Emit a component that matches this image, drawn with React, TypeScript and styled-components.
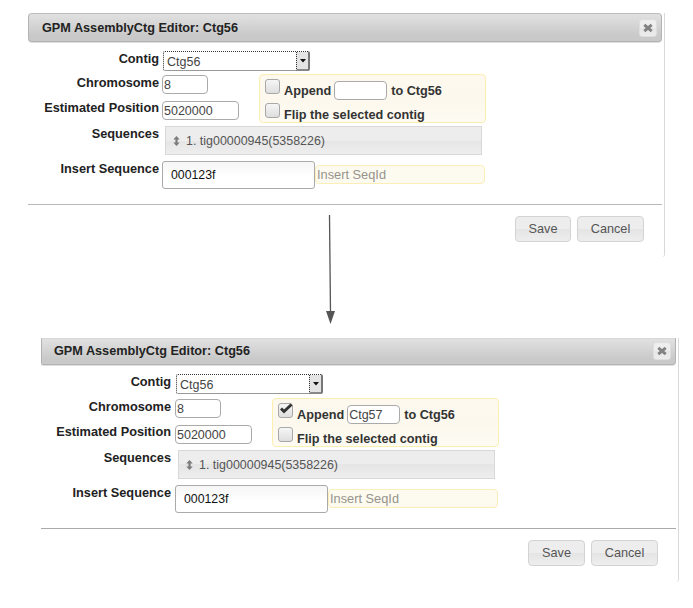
import React from 'react';
import styled, { createGlobalStyle } from 'styled-components';

const GlobalStyle = createGlobalStyle`
  * { box-sizing: border-box; }
  body { margin: 0; background: #fff; font-family: "Liberation Sans", Arial, sans-serif; }
`;

const Page = styled.main`
  width: 693px;
  height: 608px;
  overflow: hidden;
  display: flex;
  flex-direction: column;
  padding-top: 13px;
`;

const Dialog = styled.section<{ $lower?: boolean }>`
  display: flex;
  flex-direction: column;
  flex: none;
  width: ${p => (p.$lower ? 638 : 637)}px;
  height: 244px;
  margin-left: ${p => (p.$lower ? 41 : 28)}px;
  padding-right: 2px;
  border-right: 1px solid #d9d9d9;
  border-bottom-right-radius: 3px;
`;

const TitleBar = styled.header<{ $lower?: boolean }>`
  display: flex;
  flex: none;
  align-items: center;
  justify-content: space-between;
  height: ${p => (p.$lower ? 27 : 29)}px;
  padding: ${p => (p.$lower ? '0 4px 2px 12px' : '0 4px 0 13px')};
  border: 1px solid #b3b3b3;
  border-top-color: ${p => (p.$lower ? '#d8d8d8' : '#bdbdbd')};
  border-radius: ${p => (p.$lower ? '0 0 4px 2px' : '4px')};
  background: linear-gradient(#e1e1e1, #c9c9c9 80%);
  box-shadow: 0 1px 0 #dedede;
`;

const Title = styled.h1`
  margin: 0;
  font-size: 12.68px;
  line-height: 16px;
  color: #222;
`;

const CloseButton = styled.button`
  display: flex;
  align-items: center;
  justify-content: center;
  width: 18px;
  height: 18px;
  padding: 0;
  border: 1px solid #dedede;
  border-radius: 3px;
  background: linear-gradient(#eee 50%, #e6e6e6 50%, #ececec);
`;

const Form = styled.div<{ $lower?: boolean }>`
  display: grid;
  flex: none;
  grid-template-columns: ${p => (p.$lower ? '130px 97px 227px' : '131px 97px 227px')};
  grid-template-rows: ${p => (p.$lower ? 25 : 24)}px 26px 25px 35px 28px;
  column-gap: ${p => (p.$lower ? 4 : 3)}px;
  width: 461px;
  margin-top: 9px;
`;

const Label = styled.label<{ $up?: boolean }>`
  grid-column: 1;
  justify-self: end;
  margin-top: ${p => (p.$up ? -1 : 0)}px;
  font-size: 12.75px;
  font-weight: bold;
  line-height: 16px;
  color: #222;
  white-space: nowrap;
`;

const Select = styled.div`
  grid-column: 2 / 4;
  display: flex;
  width: 147px;
  height: 20px;
  margin-left: 1px;
  border: 1px dotted #333;
  border-right: 2px solid #777;
  border-radius: 2px;
  background: #fff;
`;

const SelectValue = styled.span`
  flex: 1;
  padding: 1px 0 0 3px;
  font-size: 12.5px;
  line-height: 18px;
  color: #444;
`;

const SelectArrow = styled.span`
  display: flex;
  align-items: center;
  justify-content: center;
  width: 12px;
  margin-bottom: -1px;
  border-left: 1px dotted #333;
  border-bottom: 2px solid #888;
  background: #e4e4e4;
`;

const TextInput = styled.input<{ $w: number }>`
  width: ${p => p.$w}px;
  height: 19px;
  margin: 0;
  padding: 0 0 0 1px;
  border: 1px solid #aaa;
  border-radius: 4px;
  outline: 0;
  background: #fff;
  font: 12.5px "Liberation Sans", Arial, sans-serif;
  color: #444;
`;

const Options = styled.div<{ $lower?: boolean }>`
  grid-column: 3;
  grid-row: 2 / 4;
  display: flex;
  flex-direction: column;
  height: 49px;
  margin: -1px 0 0 ${p => (p.$lower ? -4 : -3)}px;
  width: 227px;
  padding: 4px 5px;
  border: 1px solid #fceeae;
  border-radius: 4px;
  background: linear-gradient(#fdf9ee, #fcf8ed 55%, #fefbf3);
`;

const OptionRow = styled.label`
  display: flex;
  height: 24px;
  font-size: 12.68px;
  font-weight: bold;
  line-height: 24px;
  color: #333;
  white-space: nowrap;
`;

const OptionText = styled.span<{ $gap: number }>`
  margin-left: ${p => p.$gap}px;
`;

const InlineInput = styled(TextInput)`
  margin: 2px 0 0 3px;
`;

const CheckBox = styled.span`
  display: block;
  flex: none;
  width: 15px;
  height: 15px;
  border: 1px solid #a8a8a8;
  border-radius: 3px;
  background: linear-gradient(#f6f6f6, #dedede);

  svg { display: block; margin: -1px 0 0 0; overflow: visible; }
`;

const SequenceItem = styled.div`
  grid-column: 2 / 4;
  display: flex;
  align-items: center;
  width: 317px;
  height: 29px;
  margin-left: 3px;
  padding-left: 6px;
  border: 1px solid #d8d8d8;
  background: linear-gradient(#ededed 50%, #e5e5e5 50%, #eee);
  font-size: 12.45px;
  color: #555;

  svg { margin: 1px 6px 0 1px; }
`;

const InsertRow = styled.div`
  grid-column: 2 / 4;
  display: flex;
  align-items: flex-start;
  height: 28px;
`;

const InsertInput = styled(TextInput)`
  height: 28px;
  padding: 0 0 0 8px;
  border-radius: 3px;
  background: linear-gradient(#f6f6f6, #fff 60%);
  font-size: 12.3px;
  color: #111;
`;

const Hint = styled.span`
  width: 170px;
  height: 19px;
  margin-top: 4px;
  padding-left: 1px;
  border: 1px solid #fceeb8;
  border-radius: 4px;
  background: #fdfaf0;
  font-size: 12.8px;
  line-height: 18px;
  color: #96948c;
`;

const Footer = styled.footer<{ $lower?: boolean }>`
  display: flex;
  flex: none;
  justify-content: flex-end;
  gap: 6px;
  margin-top: 15px;
  padding: 11px 18px 0 0;
  border-top: 1px solid ${p => (p.$lower ? '#aaa' : '#b8b8b8')};
`;

const Button = styled.button<{ $w: number }>`
  width: ${p => p.$w}px;
  height: 26px;
  padding: 0;
  border: 1px solid #d3d3d3;
  border-radius: 4px;
  background: linear-gradient(#ededed 50%, #e4e4e4 50%, #eee);
  font: 12.7px "Liberation Sans", Arial, sans-serif;
  color: #555;
`;

const ArrowStrip = styled.div`
  flex: none;
  height: 81px;
  svg { display: block; margin: -42px 0 0 320px; }
`;

function CloseIcon() {
  return (
    <svg width="10" height="10" viewBox="0 0 10 10">
      <path d="M1.3 1.8 L8.7 8.2 M8.7 1.8 L1.3 8.2" stroke="#828282" strokeWidth="2.9" />
    </svg>
  );
}

function SortIcon() {
  return (
    <svg width="7" height="10" viewBox="0 0 7 10">
      <path d="M3.5 0 L6.7 3.4 H4.6 V6.6 H6.7 L3.5 10 L0.3 6.6 H2.4 V3.4 H0.3 Z" fill="#7c7c7c" />
    </svg>
  );
}

type EditorProps = { append?: string; lower?: boolean };

function Editor({ append = '', lower }: EditorProps) {
  return (
    <Dialog $lower={lower}>
      <TitleBar $lower={lower}>
        <Title>GPM AssemblyCtg Editor: Ctg56</Title>
        <CloseButton aria-label="Close"><CloseIcon /></CloseButton>
      </TitleBar>
      <Form $lower={lower}>
        <Label>Contig</Label>
        <Select>
          <SelectValue>Ctg56</SelectValue>
          <SelectArrow>
            <svg width="6" height="4"><path d="M0 0 H6 L3 3.5 Z" fill="#111" /></svg>
          </SelectArrow>
        </Select>
        <Label>Chromosome</Label>
        <TextInput $w={46} defaultValue="8" />
        <Options $lower={lower}>
          <OptionRow>
            <CheckBox>
              {append && (
                <svg width="15" height="13"><path d="M2 5.5 L5 8.5 L12.5 1.5" fill="none" stroke="#333" strokeWidth="2.9" /></svg>
              )}
            </CheckBox>
            <OptionText $gap={4}>Append</OptionText>
            <InlineInput $w={53} defaultValue={append} />
            <OptionText $gap={4}>to Ctg56</OptionText>
          </OptionRow>
          <OptionRow>
            <CheckBox />
            <OptionText $gap={4}>Flip the selected contig</OptionText>
          </OptionRow>
        </Options>
        <Label $up>Estimated Position</Label>
        <TextInput $w={77} defaultValue="5020000" />
        <Label>Sequences</Label>
        <SequenceItem><SortIcon />1. tig00000945(5358226)</SequenceItem>
        <Label>Insert Sequence</Label>
        <InsertRow>
          <InsertInput $w={153} defaultValue="000123f" />
          <Hint>Insert SeqId</Hint>
        </InsertRow>
      </Form>
      <Footer $lower={lower}>
        <Button $w={lower ? 57 : 56}>Save</Button>
        <Button $w={67}>Cancel</Button>
      </Footer>
    </Dialog>
  );
}

export default function App() {
  return (
    <>
      <GlobalStyle />
      <Page>
        <Editor />
        <ArrowStrip>
          <svg width="20" height="110" viewBox="0 0 20 110">
            <path d="M9.5 0 L10.5 98" stroke="#555" strokeWidth="1.3" />
            <path d="M6 96 H15 L10.5 109 Z" fill="#555" />
          </svg>
        </ArrowStrip>
        <Editor lower append="Ctg57" />
      </Page>
    </>
  );
}
